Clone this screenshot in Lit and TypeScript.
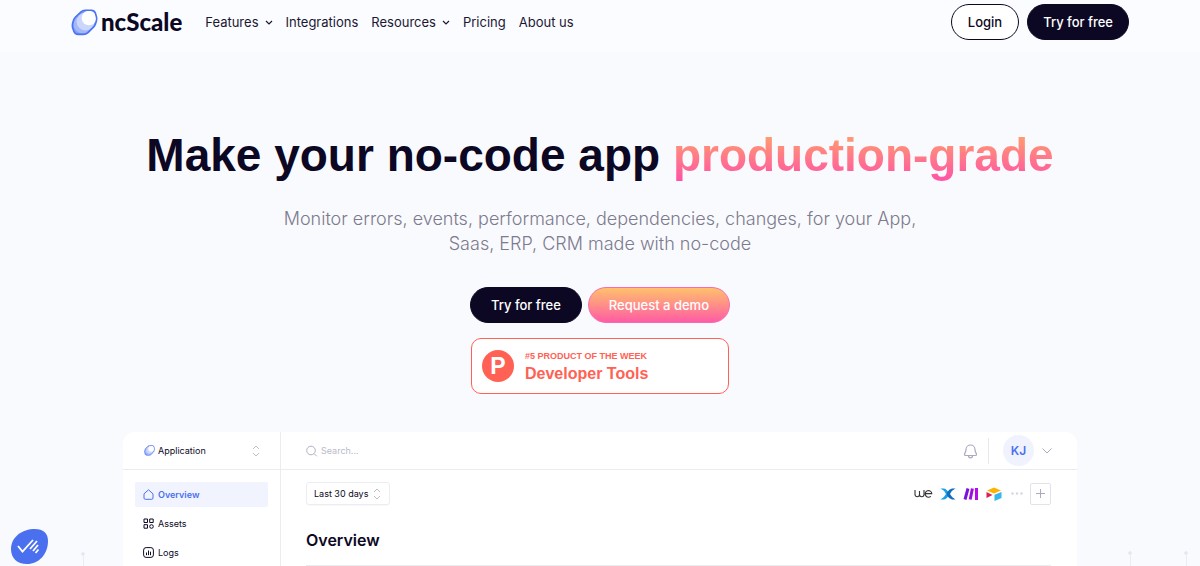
import { LitElement, html, css, svg } from "lit";
import { customElement, state } from "lit/decorators.js";

const chevron = html`<svg class="chev" viewBox="0 0 8 8" aria-hidden="true"><path d="M1 3 4 6 7 3" /></svg>`;
const sorter = html`<svg class="sorter" viewBox="0 0 8 12" aria-hidden="true"><path d="M1 4 4 1 7 4M1 8l3 3 3-3" /></svg>`;

const capsule = "M10 2.800Q11.800 1.300 14 1.300h6.500Q23.300 1.300 24.300 3.800L25.500 8Q26 10 25.300 12.500L24.300 15.500Q23.800 17 22.500 18.200L17 23.600Q15 25.400 12.500 25.400H7Q4 25.400 3 22.800L1.500 18.500Q1 16.500 1.700 14L2.600 11Q3.200 9.200 4.500 8z";

const blob = (id: string) => svg`
  <defs><clipPath id=${id}><path d=${capsule} /></clipPath></defs>
  <g clip-path="url(#${id})">
    <rect width="27" height="27" fill="#7f9bf8" />
    <circle cx="11.500" cy="15.500" r="9" fill="#a5b8fa" />
    <circle cx="14.500" cy="12.500" r="9" fill="#cbd6fd" />
    <circle cx="18" cy="9" r="7.300" fill="#fff" />
  </g>
  <path d=${capsule} fill="none" stroke="#4a74f3" stroke-width="1.600" />`;

@customElement("app-root")
export class AppRoot extends LitElement {
  @state() private section = "Overview";

  static styles = css`
    :host {
      display: block;
      font-family: Inter, "Liberation Sans", sans-serif;
      color: #0c0824;
    }
    * { box-sizing: border-box; }
    button, input, select { font: inherit; color: inherit; margin: 0; }
    a { color: inherit; text-decoration: none; }
    svg { display: block; flex: none; }
    .page {
      position: relative;
      display: flex;
      flex-direction: column;
      min-height: 100vh;
      background: #f9fafe;
      overflow: hidden;
    }
    .bar { background: #fbfcff; padding: 4px 16px 12px; }
    .bar-inner {
      display: flex;
      align-items: center;
      max-width: 1058px;
      margin: 0 auto;
    }
    .logo { display: flex; align-items: center; gap: 3px; font: 900 24px/28px Lato, sans-serif; }
    .logo-mark { width: 27px; height: 27px; }
    .nav { display: flex; align-items: center; gap: 13px; margin-left: 23px; color: #1a1732; font-size: 13px; line-height: 20px; }
    .nav-menu { display: flex; align-items: center; gap: 6px; padding: 0; border: 0; background: none; }
    .chev { width: 8px; height: 8px; fill: none; stroke: currentColor; stroke-width: 1.2; }
    .account { display: flex; gap: 8px; margin-left: auto; }
    .pill {
      height: 36px;
      padding: 0 15px;
      border: 1px solid #0c0824;
      border-radius: 18px;
      background: #0c0824;
      color: #fff;
      font-size: 13px;
      font-weight: 500;
    }
    .outline { padding: 0 16px; background: #fff; color: #0c0824; }
    .wide { padding: 0 20px; }
    .demo { border-color: #f76bb0; background: linear-gradient(#ffc16c, #ff5ca4); }
    .hero { display: flex; flex-direction: column; align-items: center; padding: 75px 16px 0; text-align: center; }
    .title { margin: 0; font: bold 46px/56px "Liberation Sans", Arial, sans-serif; }
    .grad { background: linear-gradient(#ffa866, #ff53a6); -webkit-background-clip: text; background-clip: text; color: transparent; }
    .lead { max-width: 640px; margin: 23px 0 31px; font-size: 18px; font-weight: 300; line-height: 25px; color: #7d7b8d; }
    .cta { display: flex; gap: 6px; }
    .badge {
      display: flex;
      align-items: center;
      gap: 11px;
      width: 258px;
      height: 56px;
      margin-top: 15px;
      padding: 0 10px;
      border: 1px solid #ff6154;
      border-radius: 10px;
      background: #fff;
      color: #ff6154;
      font-family: "Liberation Sans", Arial, sans-serif;
      font-weight: bold;
      text-align: left;
    }
    .badge-mark { display: grid; place-items: center; width: 32px; height: 32px; border-radius: 50%; background: #ff6154; color: #fff; font-size: 23px; }
    .badge-text { display: flex; flex-direction: column; font-size: 9px; line-height: 16px; }
    .badge-name { font-size: 16px; line-height: 20px; }
    .dash {
      position: relative;
      flex: 1;
      display: grid;
      grid-template-columns: 158px 1fr;
      grid-template-rows: 38px 1fr;
      width: calc(100% - 32px);
      max-width: 954px;
      margin: 38px auto 0;
      border-radius: 12px 12px 0 0;
      background: #fff;
      font-size: 9px;
      line-height: 14px;
    }
    .app-pick { display: flex; align-items: center; gap: 3px; padding: 0 20px 0 21px; border-right: 1px solid #ebecf2; border-bottom: 1px solid #ebecf2; }
    .app-mark { width: 11px; height: 11px; }
    .plain-select { appearance: none; flex: 1; min-width: 0; padding: 0; border: 0; background: none; font-weight: 400; }
    .sorter { width: 8px; height: 12px; fill: none; stroke: #bdbdcd; }
    .top { display: flex; align-items: center; padding: 0 25px; border-bottom: 1px solid #ebecf2; }
    .search { display: flex; align-items: center; gap: 3px; flex: 1; }
    .search-icon { width: 12px; height: 12px; fill: none; stroke: #aeb0c4; }
    .search-box { flex: 1; min-width: 0; padding: 0; border: 0; background: none; outline: 0; }
    .search-box::placeholder { color: #b9bacb; opacity: 1; }
    .icon-button { display: grid; place-items: center; padding: 0; border: 0; background: none; }
    .bell { width: 15px; height: 16px; fill: none; stroke: #a9abc0; stroke-width: 1.2; }
    .divider { width: 1px; height: 26px; margin: 0 14px 0 10px; background: #e6e7ef; }
    .avatar { display: grid; place-items: center; width: 31px; height: 31px; margin-right: 8px; border-radius: 50%; background: #f0f3fe; color: #4a70f0; font-size: 12px; font-weight: 600; }
    .more { width: 10px; height: 10px; fill: none; stroke: #a9abc0; }
    .side { display: flex; flex-direction: column; gap: 4px; padding: 12px 12px 0; border-right: 1px solid #ebecf2; }
    .side-link { display: flex; align-items: center; gap: 4px; height: 25px; padding: 0 8px; border-radius: 2px; }
    .current { background: #f1f4fe; color: #4a70f0; font-weight: 600; }
    .side-icon { width: 11px; height: 11px; fill: none; stroke: currentColor; }
    .content { padding: 12px 26px 0 25px; }
    .tools { display: flex; align-items: center; }
    .range { display: flex; align-items: center; width: 84px; height: 23px; padding: 0 8px 0 7px; border: 1px solid #ecedf3; border-radius: 3px; box-shadow: 0 1px 1px #0c082408; }
    .apps { display: flex; align-items: center; gap: 7px; margin-left: auto; }
    .app { width: 16px; height: 14px; }
    .we { width: 19px; }
    .dots { width: 12px; height: 3px; margin: 0 0 0 2px; fill: #d5d5e2; }
    .add { display: grid; place-items: center; width: 21px; height: 22px; padding: 0; border: 1px solid #e1e2ec; border-radius: 2px; background: #fff; }
    .plus { width: 9px; height: 9px; fill: none; stroke: #a9abc0; }
    .section-title { margin: 0; padding: 22px 0 12px; border-bottom: 1px solid #ebecf2; font-size: 16px; font-weight: 600; line-height: 26px; }
    .circuit { position: absolute; bottom: 0; width: 110px; height: 40px; fill: #e4e4f1; stroke: #ececf6; }
    .circuit-right { right: 0; }
    .circuit-left { left: 0; }
    .consent { position: fixed; left: 10px; bottom: 1px; width: 38px; height: 37px; padding: 0; border: 0; background: none; }
  `;

  private sideLink(name: string, icon: unknown) {
    return html`<a
      href="#"
      class="side-link ${this.section === name ? "current" : ""}"
      @click=${(e: Event) => {
        e.preventDefault();
        this.section = name;
      }}
      ><svg class="side-icon" viewBox="0 0 11 11" aria-hidden="true">${icon}</svg>${name}</a>`;
  }

  render() {
    return html`
      <div class="page">
        <header class="bar">
          <div class="bar-inner">
            <a class="logo" href="#"><svg class="logo-mark" viewBox="0 0 27 27" aria-hidden="true">${blob("mark")}</svg>ncScale</a>
            <nav class="nav">
              <button class="nav-menu">Features ${chevron}</button>
              <a href="#">Integrations</a>
              <button class="nav-menu">Resources ${chevron}</button>
              <a href="#">Pricing</a>
              <a href="#">About us</a>
            </nav>
            <div class="account">
              <button class="pill outline">Login</button>
              <button class="pill">Try for free</button>
            </div>
          </div>
        </header>

        <svg class="circuit circuit-left" viewBox="0 0 110 40" aria-hidden="true"><circle cx="83" cy="28" r="1.500" /><path d="M83.500 29v11" /></svg>
        <svg class="circuit circuit-right" viewBox="0 0 110 40" aria-hidden="true"><circle cx="40" cy="27" r="1.500" /><circle cx="96" cy="27" r="1.500" /><path d="M40.500 28v12M96.500 28v12" /></svg>

        <section class="hero">
          <h1 class="title">Make your no-code app <span class="grad">production-grade</span></h1>
          <p class="lead">Monitor errors, events, performance, dependencies, changes, for your App, Saas, ERP, CRM made with no-code</p>
          <div class="cta">
            <button class="pill wide">Try for free</button>
            <button class="pill wide demo">Request a demo</button>
          </div>
          <a class="badge" href="#">
            <span class="badge-mark">P</span>
            <span class="badge-text">#5 PRODUCT OF THE WEEK<span class="badge-name">Developer Tools</span></span>
          </a>
        </section>

        <section class="dash">
          <div class="app-pick">
            <svg class="app-mark" viewBox="0 0 27 27" aria-hidden="true">${blob("mini")}</svg>
            <select class="plain-select" aria-label="Application"><option>Application</option></select>
            ${sorter}
          </div>
          <div class="top">
            <label class="search">
              <svg class="search-icon" viewBox="0 0 12 12" aria-hidden="true"><circle cx="5" cy="5.500" r="4.300" /><path d="m8.200 8.700 2.600 2.600" /></svg>
              <input class="search-box" type="search" aria-label="Search" placeholder="Search..." />
            </label>
            <button class="icon-button" aria-label="Notifications"><svg class="bell" viewBox="0 0 15 16"><path d="M3 6.500a4.500 4.500 0 0 1 9 0c0 3 1.500 3.500 1.500 5 0 .6-.4 1-1 1h-10c-.6 0-1-.4-1-1 0-1.500 1.500-2 1.500-5zM5.500 12.800a2 2 0 0 0 4 0" /></svg></button>
            <span class="divider"></span>
            <span class="avatar">KJ</span>
            <button class="icon-button" aria-label="Account menu"><svg class="more" viewBox="0 0 10 10"><path d="M.5 2.500 5 7l4.500-4.500" /></svg></button>
          </div>
          <nav class="side">
            ${this.sideLink("Overview", svg`<path d="M1 4.800 5.500.8 10 4.800V9a1.300 1.300 0 0 1-1.300 1.300H2.300A1.300 1.300 0 0 1 1 9z" />`)}
            ${this.sideLink("Assets", svg`<path d="M1 1h3.500v3.500H1zM6.700 1h3.500v3.500H6.700zM1 6.700h3.500v3.500H1z" /><circle cx="8.500" cy="8.500" r="1.800" />`)}
            ${this.sideLink("Logs", svg`<rect x=".6" y=".6" width="9.800" height="9.800" rx="2.500" /><path d="M3.500 5.500v2.700M5.500 3.500v4.700M7.500 4.700v3.500" />`)}
          </nav>
          <div class="content">
            <div class="tools">
              <label class="range">
                <select class="plain-select" aria-label="Period"><option>Last 30 days</option></select>
                ${sorter}
              </label>
              <div class="apps">
                <svg class="app we" viewBox="0 0 19 14" role="img" aria-label="WeWeb" fill="none" stroke="#333" stroke-width="1.100"><path d="M1 3v4.500a2.200 2.200 0 0 0 4.500 0V4v3.500a2.200 2.200 0 0 0 4.500 0V3M11.200 6.600h6.600a3.300 3.300 0 1 0-1 2.700" /></svg>
                <svg class="app" viewBox="0 0 16 14" role="img" aria-label="Xano"><path d="M.5 1.500H4Q7 2 9.500 7 7 12 4 12.500H.5Q4 11 6 7 4 3 .5 1.500z" fill="#18a0e8" /><path d="M15.500 1.500H12Q9 2 7 5.500v3Q9 12 12 12.500h3.500Q12 11 10 7q2-4 5.500-5.500z" fill="#136cc0" /></svg>
                <svg class="app" viewBox="0 0 16 14" role="img" aria-label="Make" fill="none" stroke-width="3"><path d="M2 12.500 5 1.500" stroke="#7a12d8" /><path d="m7.200 12.500 2.200-11" stroke="#9b10e0" /><path d="M13.500 1v12" stroke="#b80cea" /></svg>
                <svg class="app" viewBox="0 0 16 14" role="img" aria-label="Airtable"><path d="m1 3.500 7-3 7 3-7 3z" fill="#fcb400" /><path d="M.5 5v6l6-3z" fill="#dc1f50" /><path d="M8.500 7.800 15.500 5v6l-7 3z" fill="#35b6ec" /></svg>
                <svg class="dots" viewBox="0 0 12 3" aria-hidden="true"><circle cx="1.500" cy="1.500" r="1.200" /><circle cx="6" cy="1.500" r="1.200" /><circle cx="10.500" cy="1.500" r="1.200" /></svg>
                <button class="add" aria-label="Add"><svg class="plus" viewBox="0 0 9 9"><path d="M4.500 0v9M0 4.500h9" /></svg></button>
              </div>
            </div>
            <h2 class="section-title">Overview</h2>
          </div>
        </section>

        <button class="consent" aria-label="Consent preferences">
          <svg viewBox="0 0 38 37"><path d="M25 1c8 0 13 4 13 12 0 13-9 23-21 23C7 36 1 30 1 21 1 9 12 1 25 1z" fill="#4a70f0" /><path d="m8 18 4.500 5.500L23 12M20 21l7-8M23 23l5-6M25.500 25l3-3.500" fill="none" stroke="#fff" stroke-width="1.800" /></svg>
        </button>
      </div>
    `;
  }
}
